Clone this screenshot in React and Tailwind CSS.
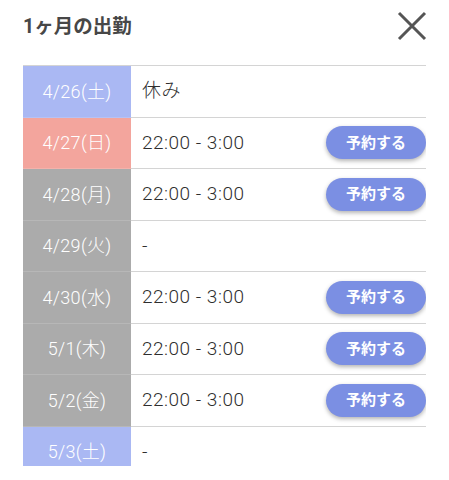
const rows = [
  { date: '4/26(土)', kind: 'sat', text: '休み', book: false },
  { date: '4/27(日)', kind: 'sun', text: '22:00 - 3:00', book: true },
  { date: '4/28(月)', kind: 'day', text: '22:00 - 3:00', book: true },
  { date: '4/29(火)', kind: 'day', text: '-', book: false },
  { date: '4/30(水)', kind: 'day', text: '22:00 - 3:00', book: true },
  { date: '5/1(木)', kind: 'day', text: '22:00 - 3:00', book: true },
  { date: '5/2(金)', kind: 'day', text: '22:00 - 3:00', book: true },
  { date: '5/3(土)', kind: 'sat', text: '-', book: false },
];

const cellBg = {
  sat: 'bg-[#aab8f3]',
  sun: 'bg-[#f3a59d]',
  day: 'bg-[#ababab]',
};

export default function App() {
  return (
    <div
      className="w-[449px] h-[480px] bg-white overflow-hidden"
      style={{ fontFamily: 'Roboto, "Noto Sans CJK JP", sans-serif' }}
    >
      <div className="flex justify-between pl-[23px] pr-[23px] pt-[11px] h-[65px] items-start">
        <h1 className="text-[19.5px] font-bold text-[#474747] mt-[2px] leading-[28px]">1ヶ月の出勤</h1>
        <button className="w-[30px] h-[30px] mr-[-1px] flex items-center justify-center">
          <svg width="30" height="30" viewBox="0 0 30 30">
            <path d="M2 2 L28 28 M28 2 L2 28" stroke="#555" strokeWidth="3" />
          </svg>
        </button>
      </div>
      <div className="mx-[23px] h-[401px] overflow-hidden border-t border-[#d4d4d4]">
        {rows.map((r) => (
          <div key={r.date} className="flex h-[51.5px]">
            <div
              className={`w-[108px] shrink-0 flex items-center justify-center text-white text-[18px] font-light tracking-[0.3px] border-b border-white/15 ${cellBg[r.kind]}`}
            >
              {r.date}
            </div>
            <div className="flex-1 flex items-center justify-between pl-[11px] border-b border-[#d4d4d4]">
              <span className="text-[19px] font-light tracking-[0.5px] text-[#2e2e2e]">{r.text}</span>
              {r.book && (
                <button className="w-[100px] h-[33px] rounded-full bg-[#7b8fe3] text-white text-[15px] font-bold shadow-[0_2px_4px_rgba(0,0,0,0.3)]">
                  予約する
                </button>
              )}
            </div>
          </div>
        ))}
      </div>
    </div>
  );
}
